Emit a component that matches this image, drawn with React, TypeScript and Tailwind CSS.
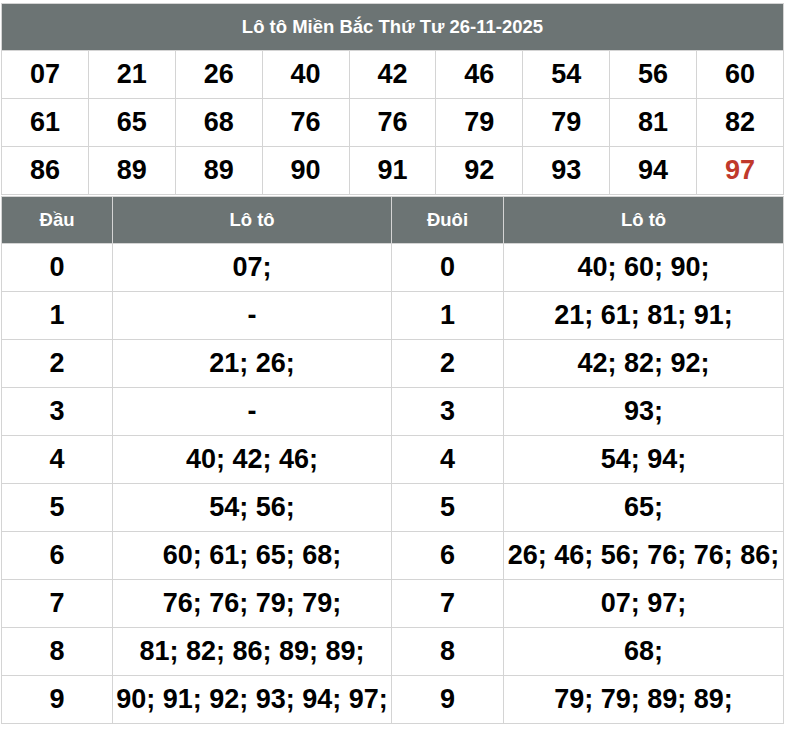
const numbers = [
  ['07', '21', '26', '40', '42', '46', '54', '56', '60'],
  ['61', '65', '68', '76', '76', '79', '79', '81', '82'],
  ['86', '89', '89', '90', '91', '92', '93', '94', '97'],
];

const rows = [
  { dau: '0', dauLoto: '07;', duoi: '0', duoiLoto: '40; 60; 90;' },
  { dau: '1', dauLoto: '-', duoi: '1', duoiLoto: '21; 61; 81; 91;' },
  { dau: '2', dauLoto: '21; 26;', duoi: '2', duoiLoto: '42; 82; 92;' },
  { dau: '3', dauLoto: '-', duoi: '3', duoiLoto: '93;' },
  { dau: '4', dauLoto: '40; 42; 46;', duoi: '4', duoiLoto: '54; 94;' },
  { dau: '5', dauLoto: '54; 56;', duoi: '5', duoiLoto: '65;' },
  { dau: '6', dauLoto: '60; 61; 65; 68;', duoi: '6', duoiLoto: '26; 46; 56; 76; 76; 86;' },
  { dau: '7', dauLoto: '76; 76; 79; 79;', duoi: '7', duoiLoto: '07; 97;' },
  { dau: '8', dauLoto: '81; 82; 86; 89; 89;', duoi: '8', duoiLoto: '68;' },
  { dau: '9', dauLoto: '90; 91; 92; 93; 94; 97;', duoi: '9', duoiLoto: '79; 79; 89; 89;' },
];

export default function App() {
  return (
    <div className="bg-white w-[786px] h-[729px] pt-[3px] pl-[1px] font-['Liberation_Sans',Arial,sans-serif]">
      <table className="w-[783px] border-collapse table-fixed">
        <thead>
          <tr>
            <th
              colSpan={9}
              className="h-[47px] bg-[#6c7474] text-white text-[18.5px] font-bold border border-[#d4d4d4]"
            >
              Lô tô Miền Bắc Thứ Tư 26-11-2025
            </th>
          </tr>
        </thead>
        <tbody>
          {numbers.map((row, i) => (
            <tr key={i}>
              {row.map((n, j) => (
                <td
                  key={j}
                  className={`h-[48px] border border-[#d4d4d4] text-center text-[27px] font-bold ${
                    i === 2 && j === 8 ? 'text-[#c0392b]' : 'text-black'
                  }`}
                >
                  {n}
                </td>
              ))}
            </tr>
          ))}
        </tbody>
      </table>

      <table className="w-[783px] mt-[1px] border-collapse table-fixed">
        <colgroup>
          <col className="w-[111px]" />
          <col className="w-[279px]" />
          <col className="w-[112px]" />
          <col />
        </colgroup>
        <thead>
          <tr className="bg-[#6c7474] text-white text-[18.5px] font-bold">
            <th className="h-[47px] border border-[#d4d4d4]">Đầu</th>
            <th className="border border-[#d4d4d4]">Lô tô</th>
            <th className="border border-[#d4d4d4]">Đuôi</th>
            <th className="border border-[#d4d4d4]">Lô tô</th>
          </tr>
        </thead>
        <tbody>
          {rows.map((r) => (
            <tr key={r.dau} className="text-[27px] font-bold text-black">
              <td className="h-[48px] border border-[#d4d4d4] text-center">{r.dau}</td>
              <td className="border border-[#d4d4d4] text-center whitespace-nowrap">{r.dauLoto}</td>
              <td className="border border-[#d4d4d4] text-center">{r.duoi}</td>
              <td className="border border-[#d4d4d4] text-center whitespace-nowrap">{r.duoiLoto}</td>
            </tr>
          ))}
        </tbody>
      </table>
    </div>
  );
}
